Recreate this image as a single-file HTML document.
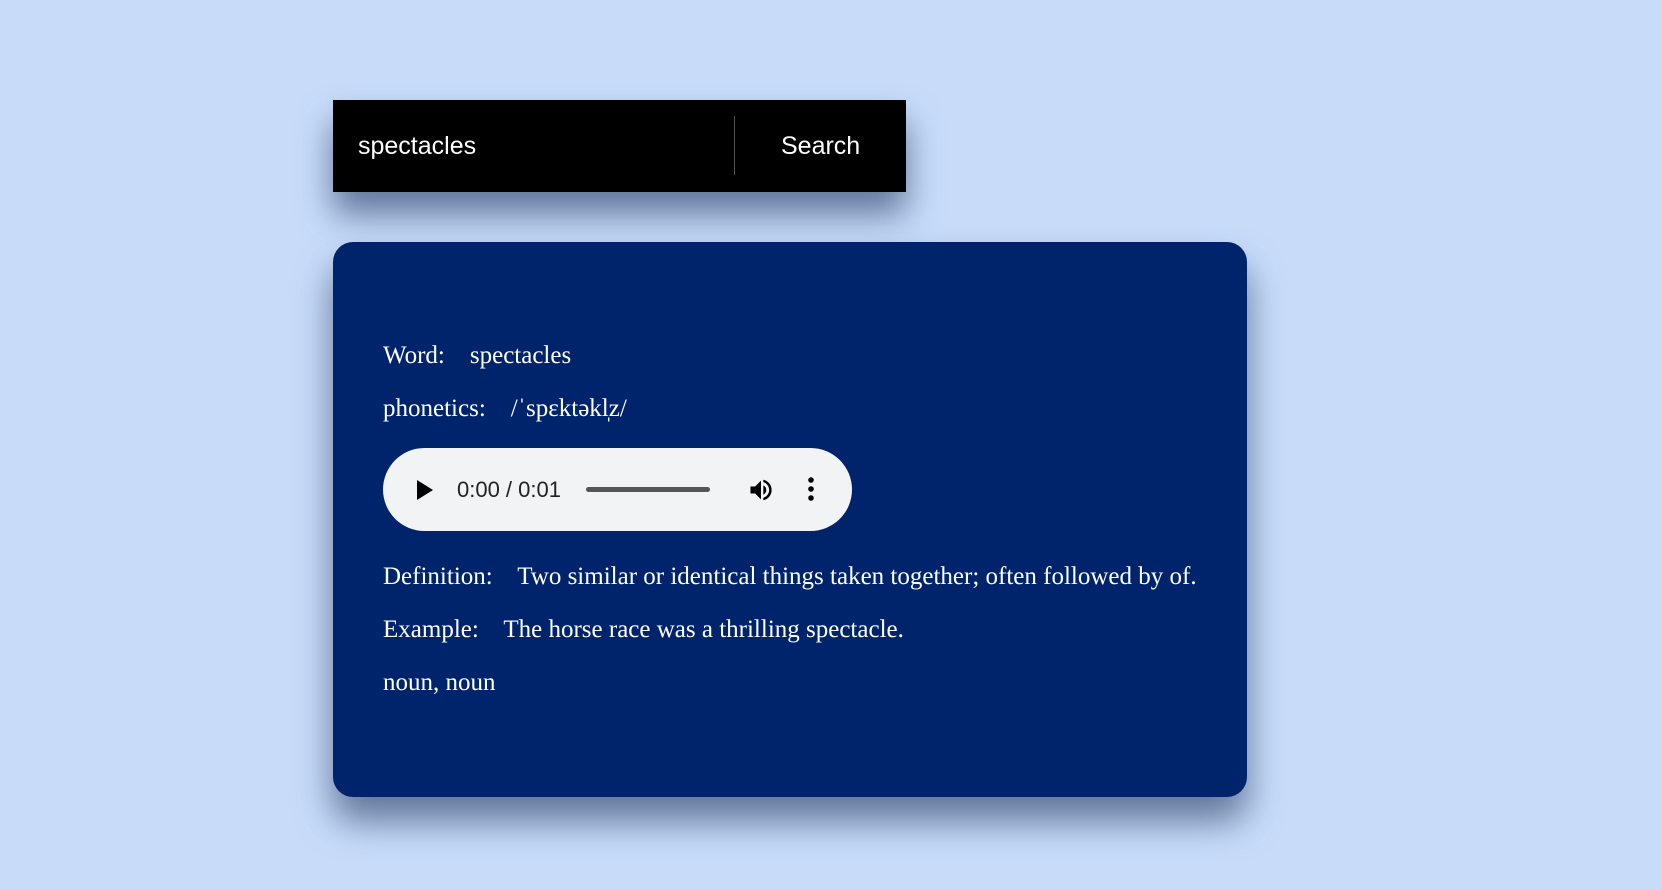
<!DOCTYPE html>
<html><head><meta charset="utf-8"><style>
body{margin:0;width:1662px;height:890px;background:#c8dcfa;position:relative;overflow:hidden;font-family:"Liberation Serif",serif}
.search{position:absolute;left:333px;top:100px;width:573px;height:92px;background:#000;box-shadow:0 22px 34px rgba(30,50,90,.6)}
.search .q{position:absolute;left:25px;top:0;font:25px "Liberation Sans",sans-serif;line-height:92px;color:#fff}
.search .div{position:absolute;left:401px;top:16px;width:1px;height:59px;background:#555}
.search .b{position:absolute;left:448px;top:0;font:25px "Liberation Sans",sans-serif;line-height:92px;color:#fff}
.card{position:absolute;left:333px;top:242px;width:914px;height:555px;background:#00246b;border-radius:20px;box-shadow:0 24px 36px rgba(30,50,90,.6)}
.t{position:absolute;left:50px;color:#fff;font-size:25px;line-height:30px;white-space:pre}
.audio{position:absolute;left:50px;top:206px;width:469px;height:83px;background:#f1f3f4;border-radius:42px}
.time{position:absolute;left:74px;top:0;font:22px "Liberation Sans",sans-serif;line-height:83px;color:#222}
.bar{position:absolute;left:203px;top:39px;width:124px;height:5px;border-radius:3px;background:#555}
</style></head><body>
<div class="search"><div class="q">spectacles</div><div class="div"></div><div class="b">Search</div></div>
<div class="card">
<div class="t" style="top:99px">Word:    spectacles</div>
<div class="t" style="top:152px">phonetics:    /ˈspɛktəkl̩z/</div>
<div class="audio">
<svg style="position:absolute;left:33px;top:31px" width="18" height="22" viewBox="0 0 18 22"><path d="M1 1L17 11L1 21Z" fill="#000"/></svg>
<div class="time">0:00 / 0:01</div>
<div class="bar"></div>
<svg style="position:absolute;left:364px;top:28px" width="28" height="28" viewBox="0 0 24 24"><path d="M3 9v6h4l5 5V4L7 9H3zm13.5 3A4.5 4.5 0 0 0 14 8v8a4.5 4.5 0 0 0 2.5-4zM14 3.2v2.1a7 7 0 0 1 0 13.4v2.1a9 9 0 0 0 0-17.6z" fill="#000"/></svg>
<svg style="position:absolute;left:424px;top:28px" width="8" height="26" viewBox="0 0 8 26"><circle cx="4" cy="4" r="2.8"/><circle cx="4" cy="13" r="2.8"/><circle cx="4" cy="22" r="2.8"/></svg>
</div>
<div class="t" style="top:320px">Definition:    Two similar or identical things taken together; often followed by of.</div>
<div class="t" style="top:373px">Example:    The horse race was a thrilling spectacle.</div>
<div class="t" style="top:426px">noun, noun</div>
</div>
</body></html>
